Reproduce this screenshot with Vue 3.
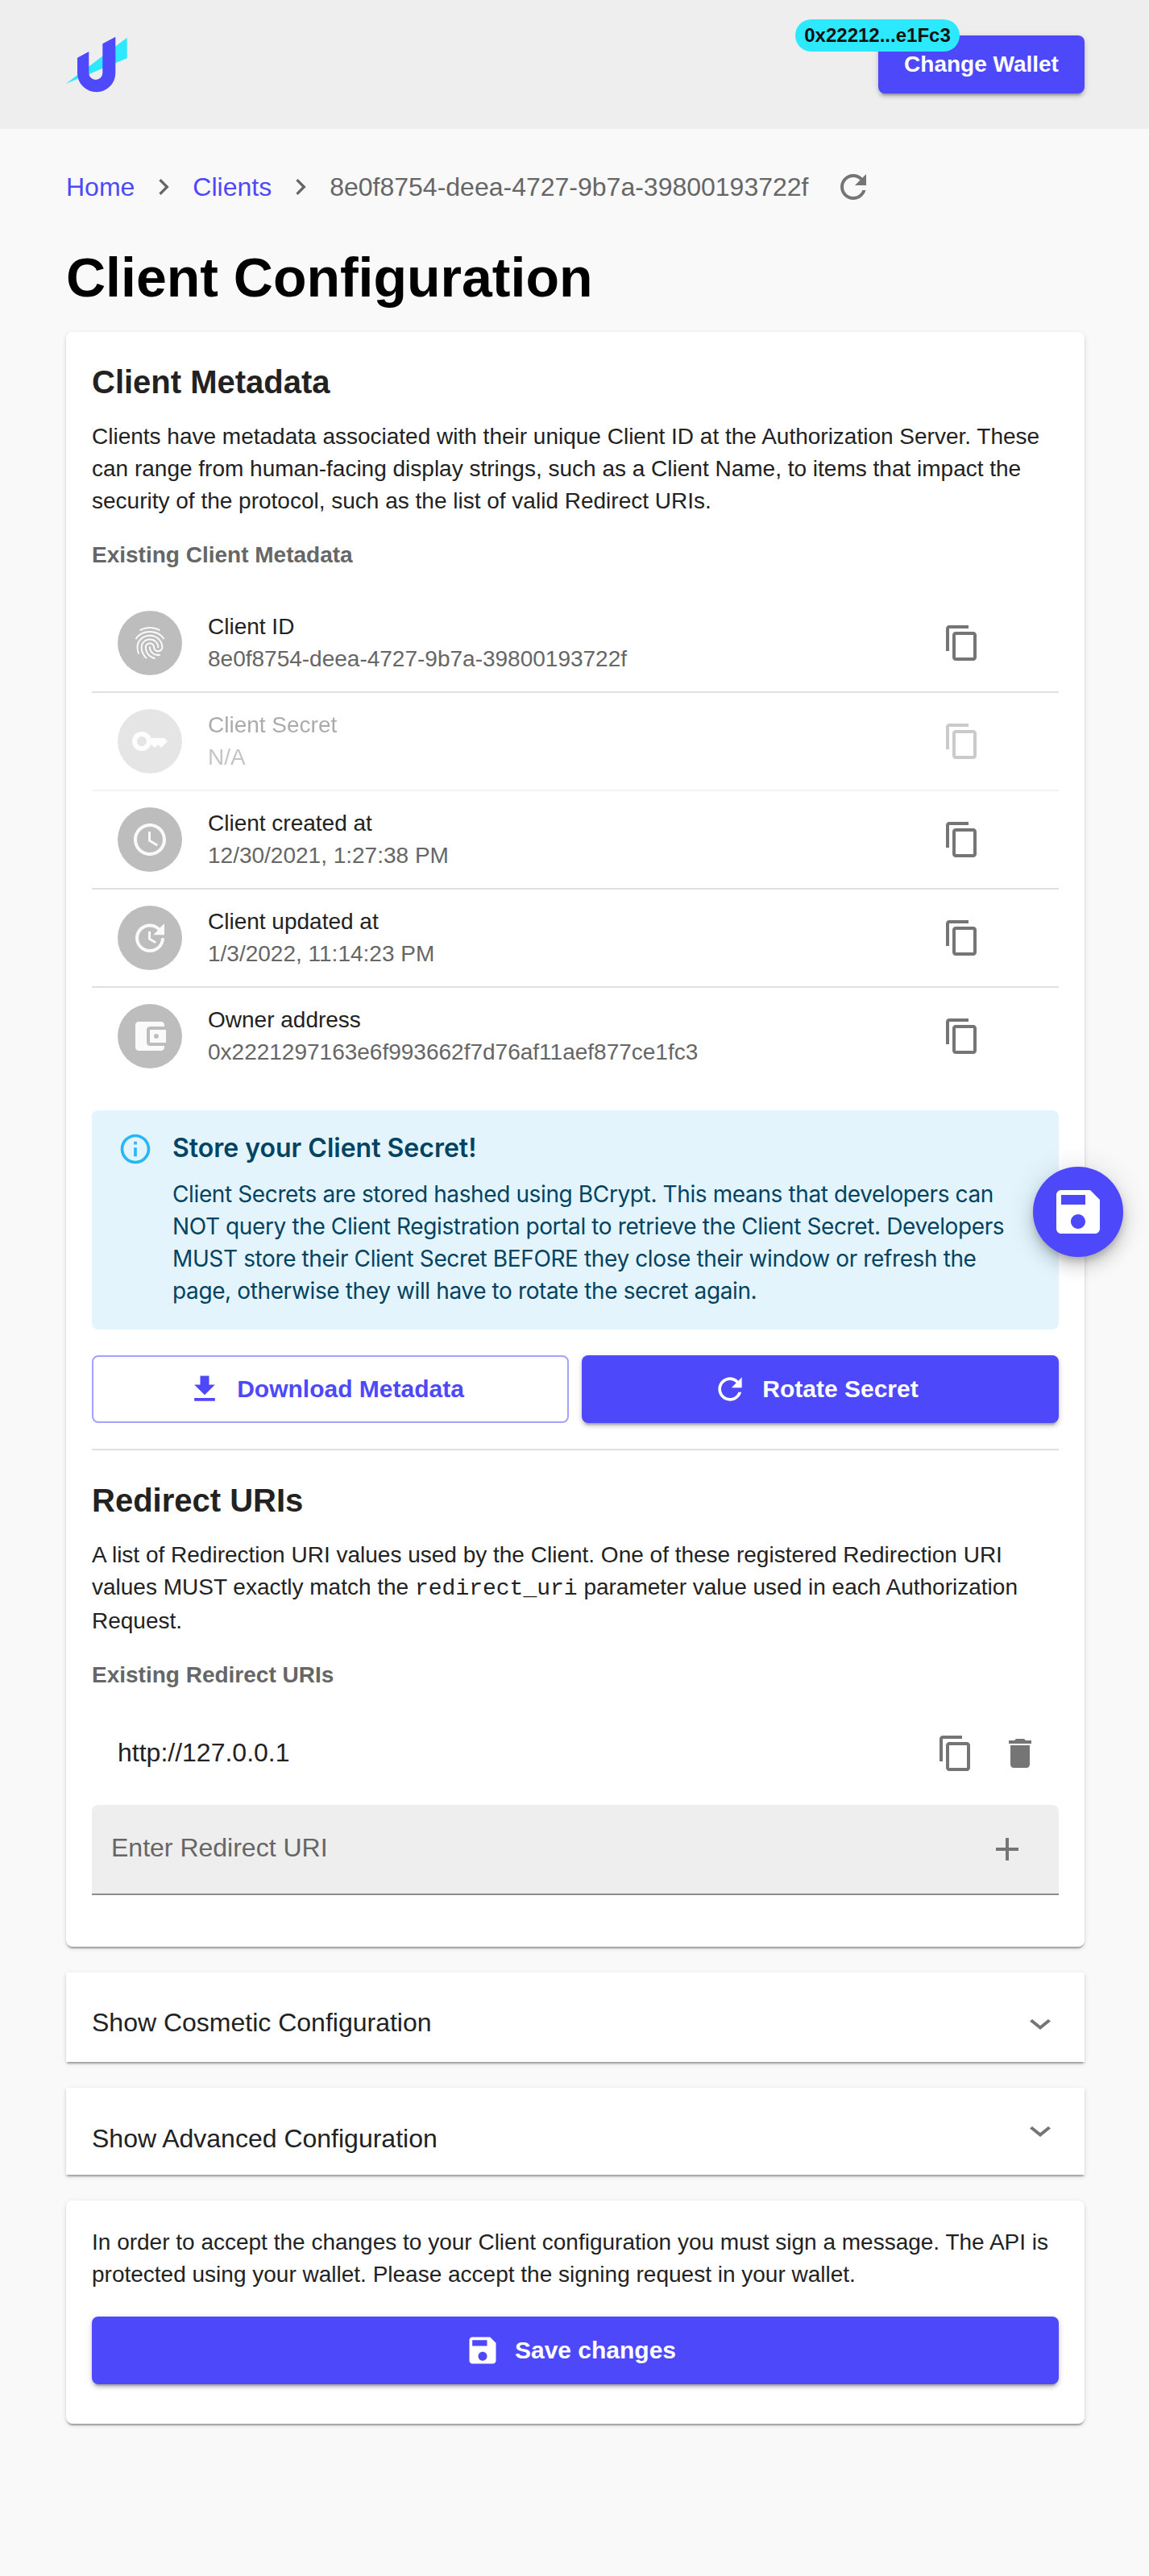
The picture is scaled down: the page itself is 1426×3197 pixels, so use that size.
<script setup>
const copyPath = 'M16 1H4c-1.1 0-2 .9-2 2v14h2V3h12V1zm3 4H8c-1.1 0-2 .9-2 2v14c0 1.1.9 2 2 2h11c1.1 0 2-.9 2-2V7c0-1.1-.9-2-2-2zm0 16H8V7h11v14z'
const savePath = 'M17 3H5c-1.11 0-2 .9-2 2v14c0 1.1.89 2 2 2h14c1.1 0 2-.9 2-2V7l-4-4zm-5 16c-1.66 0-3-1.34-3-3s1.34-3 3-3 3 1.34 3 3-1.34 3-3 3zm3-10H5V5h10v4z'
const refreshPath = 'M17.65 6.35C16.2 4.9 14.21 4 12 4c-4.42 0-7.99 3.58-7.99 8s3.57 8 7.99 8c3.73 0 6.84-2.55 7.73-6h-2.08c-.82 2.33-3.04 4-5.65 4-3.31 0-6-2.69-6-6s2.69-6 6-6c1.66 0 3.14.69 4.22 1.78L13 11h7V4l-2.35 2.35z'
const nextPath = 'M10 6L8.59 7.41 13.17 12l-4.58 4.59L10 18l6-6z'
const expandPath = 'M16.59 8.59L12 13.17 7.41 8.59 6 10l6 6 6-6z'

const metadata = [
  {
    label: 'Client ID',
    value: '8e0f8754-deea-4727-9b7a-39800193722f',
    icon: 'M17.81 4.47c-.08 0-.16-.02-.23-.06C15.66 3.42 14 3 12.01 3c-1.98 0-3.86.47-5.57 1.41-.24.13-.54.04-.68-.2-.13-.24-.04-.55.2-.68C7.82 2.52 9.86 2 12.01 2c2.13 0 3.99.47 6.03 1.52.25.13.34.43.21.67-.09.18-.26.28-.44.28zM3.5 9.72c-.1 0-.2-.03-.29-.09-.23-.16-.28-.47-.12-.7.99-1.4 2.25-2.5 3.75-3.27C9.98 4.04 14 4.03 17.15 5.65c1.5.77 2.76 1.86 3.75 3.25.16.22.11.54-.12.7-.23.16-.54.11-.7-.12-.9-1.26-2.04-2.25-3.39-2.94-2.87-1.47-6.54-1.47-9.4.01-1.36.7-2.5 1.7-3.4 2.96-.08.14-.23.21-.39.21zm6.25 12.07c-.13 0-.26-.05-.35-.15-.87-.87-1.34-1.43-2.01-2.64-.69-1.23-1.05-2.73-1.05-4.34 0-2.97 2.54-5.39 5.66-5.39s5.66 2.42 5.66 5.39c0 .28-.22.5-.5.5s-.5-.22-.5-.5c0-2.42-2.09-4.39-4.66-4.39s-4.66 1.97-4.66 4.39c0 1.44.32 2.77.93 3.85.64 1.15 1.08 1.64 1.85 2.42.19.2.19.51 0 .71-.11.1-.24.15-.37.15zm7.17-1.85c-1.19 0-2.24-.3-3.1-.89-1.49-1.01-2.38-2.65-2.38-4.39 0-.28.22-.5.5-.5s.5.22.5.5c0 1.41.72 2.74 1.94 3.56.71.48 1.54.71 2.54.71.24 0 .64-.03 1.04-.1.27-.05.53.13.58.41.05.27-.13.53-.41.58-.57.11-1.07.12-1.21.12zM14.91 22c-.04 0-.09-.01-.13-.02-1.59-.44-2.63-1.03-3.72-2.1-1.4-1.39-2.17-3.24-2.17-5.22 0-1.62 1.38-2.94 3.08-2.94s3.08 1.32 3.08 2.94c0 1.07.93 1.94 2.08 1.94s2.08-.87 2.08-1.94c0-3.77-3.25-6.83-7.25-6.83-2.84 0-5.44 1.58-6.61 4.03-.39.81-.59 1.76-.59 2.8 0 .78.07 2.01.67 3.61.1.26-.03.55-.29.64-.26.1-.55-.04-.64-.29-.49-1.31-.73-2.61-.73-3.96 0-1.2.23-2.29.68-3.24 1.33-2.79 4.28-4.6 7.51-4.6 4.55 0 8.25 3.51 8.25 7.83 0 1.62-1.38 2.94-3.08 2.94s-3.08-1.32-3.08-2.94c0-1.07-.93-1.94-2.08-1.94s-2.08.87-2.08 1.94c0 1.71.66 3.31 1.87 4.51.95.94 1.86 1.46 3.27 1.85.27.07.42.35.35.61-.05.23-.26.38-.47.38z'
  },
  {
    label: 'Client Secret',
    value: 'N/A',
    disabled: true,
    icon: 'M21 10h-8.35C11.83 7.67 9.61 6 7 6c-3.31 0-6 2.69-6 6s2.69 6 6 6c2.61 0 4.83-1.67 5.65-4H13l2 2 2-2 2 2 4-4.04L21 10zM7 15c-1.65 0-3-1.35-3-3s1.35-3 3-3 3 1.35 3 3-1.35 3-3 3z'
  },
  {
    label: 'Client created at',
    value: '12/30/2021, 1:27:38 PM',
    icon: 'M11.99 2C6.47 2 2 6.48 2 12s4.47 10 9.99 10C17.52 22 22 17.52 22 12S17.52 2 11.99 2zM12 20c-4.42 0-8-3.58-8-8s3.58-8 8-8 8 3.58 8 8-3.58 8-8 8zm.5-13H11v6l5.25 3.15.75-1.23-4.5-2.67z'
  },
  {
    label: 'Client updated at',
    value: '1/3/2022, 11:14:23 PM',
    icon: 'M21 10.12h-6.78l2.74-2.82c-2.73-2.7-7.15-2.8-9.88-.1-2.73 2.71-2.73 7.08 0 9.79s7.15 2.71 9.88 0C18.32 15.65 19 14.08 19 12.1h2c0 1.98-.88 4.55-2.64 6.29-3.51 3.48-9.21 3.48-12.72 0-3.5-3.47-3.53-9.11-.02-12.58s9.14-3.47 12.65 0L21 3v7.12zM12.5 8v4.25l3.5 2.08-.72 1.21L11 13V8h1.5z'
  },
  {
    label: 'Owner address',
    value: '0x2221297163e6f993662f7d76af11aef877ce1fc3',
    icon: 'M21 18v1c0 1.1-.9 2-2 2H5c-1.11 0-2-.9-2-2V5c0-1.1.89-2 2-2h14c1.1 0 2 .9 2 2v1h-9c-1.11 0-2 .9-2 2v8c0 1.1.89 2 2 2h9zm-9-2h10V8H12v8zm4-2.5c-.83 0-1.5-.67-1.5-1.5s.67-1.5 1.5-1.5 1.5.67 1.5 1.5-.67 1.5-1.5 1.5z'
  }
]
</script>

<template>
  <div class="page">
    <header class="topbar">
      <svg class="logo" width="80" height="72" viewBox="0 0 80 72">
        <polygon points="1.7,60 77.7,2.7 77.7,28.3" fill="#2de9ff" />
        <path d="M16 27.7L30.3 20V46.5A8.5 8.5 0 0 0 47.3 46.5V10.3L63.3 1.7V46.6A23.65 23.65 0 0 1 16 46.6Z" fill="#4e4afb" />
      </svg>
      <div class="wallet">
        <span class="wallet__badge">0x22212...e1Fc3</span>
        <button class="btn btn--primary btn--wallet">Change Wallet</button>
      </div>
    </header>

    <main class="content">
      <nav class="crumbs">
        <a class="crumbs__link">Home</a>
        <svg class="crumbs__sep" width="40" height="40" viewBox="0 0 24 24"><path :d="nextPath" /></svg>
        <a class="crumbs__link">Clients</a>
        <svg class="crumbs__sep" width="40" height="40" viewBox="0 0 24 24"><path :d="nextPath" /></svg>
        <span class="crumbs__current">8e0f8754-deea-4727-9b7a-39800193722f</span>
        <svg class="crumbs__refresh" width="48" height="48" viewBox="0 0 24 24"><path :d="refreshPath" /></svg>
      </nav>

      <h1 class="title">Client Configuration</h1>

      <section class="card card--main">
        <h2 class="card__title">Client Metadata</h2>
        <p class="card__text">Clients have metadata associated with their unique Client ID at the Authorization Server. These can range from human-facing display strings, such as a Client Name, to items that impact the security of the protocol, such as the list of valid Redirect URIs.</p>
        <h3 class="card__label">Existing Client Metadata</h3>

        <ul class="meta">
          <li
            v-for="item in metadata"
            :key="item.label"
            class="meta__row"
            :class="{ 'meta__row--disabled': item.disabled }"
          >
            <span class="meta__avatar">
              <svg width="48" height="48" viewBox="0 0 24 24"><path :d="item.icon" /></svg>
            </span>
            <div class="meta__text">
              <div class="meta__label">{{ item.label }}</div>
              <div class="meta__value">{{ item.value }}</div>
            </div>
            <svg class="icon meta__copy" width="48" height="48" viewBox="0 0 24 24"><path :d="copyPath" /></svg>
          </li>
        </ul>

        <div class="alert">
          <svg class="alert__icon" width="44" height="44" viewBox="0 0 24 24">
            <path d="M11 7h2v2h-2zm0 4h2v6h-2zm1-9C6.48 2 2 6.48 2 12s4.48 10 10 10 10-4.48 10-10S17.52 2 12 2zm0 18c-4.41 0-8-3.59-8-8s3.59-8 8-8 8 3.59 8 8-3.59 8-8 8z" />
          </svg>
          <div>
            <div class="alert__title">Store your Client Secret!</div>
            <p class="alert__body">Client Secrets are stored hashed using BCrypt. This means that developers can NOT query the Client Registration portal to retrieve the Client Secret. Developers MUST store their Client Secret BEFORE they close their window or refresh the page, otherwise they will have to rotate the secret again.</p>
          </div>
        </div>

        <div class="actions">
          <button class="btn btn--outline btn--action">
            <svg width="44" height="44" viewBox="0 0 24 24"><path d="M19 9h-4V3H9v6H5l7 7 7-7zM5 18v2h14v-2H5z" /></svg>
            <span>Download Metadata</span>
          </button>
          <button class="btn btn--primary btn--action">
            <svg width="44" height="44" viewBox="0 0 24 24"><path :d="refreshPath" /></svg>
            <span>Rotate Secret</span>
          </button>
        </div>

        <hr class="divider" />

        <h2 class="card__title card__title--second">Redirect URIs</h2>
        <p class="card__text">A list of Redirection URI values used by the Client. One of these registered Redirection URI values MUST exactly match the <code>redirect_uri</code> parameter value used in each Authorization Request.</p>
        <h3 class="card__label">Existing Redirect URIs</h3>

        <div class="uri">
          <span class="uri__value">http://127.0.0.1</span>
          <svg class="icon" width="48" height="48" viewBox="0 0 24 24"><path :d="copyPath" /></svg>
          <svg class="icon" width="48" height="48" viewBox="0 0 24 24"><path d="M6 19c0 1.1.9 2 2 2h8c1.1 0 2-.9 2-2V7H6v12zM19 4h-3.5l-1-1h-5l-1 1H5v2h14V4z" /></svg>
        </div>

        <div class="field">
          <span class="field__placeholder">Enter Redirect URI</span>
          <svg class="icon" width="48" height="48" viewBox="0 0 24 24"><path d="M19 13h-6v6h-2v-6H5v-2h6V5h2v6h6v2z" /></svg>
        </div>
      </section>

      <section class="card accordion accordion--cosmetic">
        <span class="accordion__label">Show Cosmetic Configuration</span>
        <svg class="icon" width="52" height="42" viewBox="0 0 24 24" preserveAspectRatio="none"><path :d="expandPath" /></svg>
      </section>

      <section class="card accordion accordion--advanced">
        <span class="accordion__label">Show Advanced Configuration</span>
        <svg class="icon" width="52" height="42" viewBox="0 0 24 24" preserveAspectRatio="none"><path :d="expandPath" /></svg>
      </section>

      <section class="card card--save">
        <p class="card__text card__text--flush">In order to accept the changes to your Client configuration you must sign a message. The API is protected using your wallet. Please accept the signing request in your wallet.</p>
        <button class="btn btn--primary btn--save">
          <svg width="44" height="44" viewBox="0 0 24 24"><path :d="savePath" /></svg>
          <span>Save changes</span>
        </button>
      </section>
    </main>

    <button class="fab">
      <svg width="72" height="72" viewBox="0 0 24 24"><path :d="savePath" /></svg>
    </button>
  </div>
</template>

<style>
body {
  background: #f9f9f9;
}
</style>

<style scoped>
.page {
  position: relative;
  min-height: 3197px;
  font-family: "Liberation Sans", Arial, sans-serif;
  color: #222;
}

.topbar {
  height: 160px;
  box-sizing: border-box;
  padding: 44px 80px 0 80px;
  display: flex;
  justify-content: space-between;
  align-items: flex-start;
  background: #eee;
}

.logo {
  display: block;
}

.wallet {
  position: relative;
}

.wallet__badge {
  position: absolute;
  top: -20px;
  left: -103px;
  width: 204px;
  height: 40px;
  border-radius: 20px;
  background: #2de9ff;
  color: #111;
  font-size: 24px;
  font-weight: 700;
  line-height: 40px;
  text-align: center;
  z-index: 1;
}

.btn {
  border: 0;
  border-radius: 8px;
  font-family: inherit;
  font-size: 30px;
  font-weight: 700;
  display: flex;
  align-items: center;
  justify-content: center;
  padding: 0 12px 0 0;
}

.btn svg {
  fill: currentColor;
  margin-right: 18px;
}

.btn--primary {
  background: #4d49fa;
  color: #fff;
  box-shadow: 0 6px 2px -4px rgba(0, 0, 0, 0.2), 0 4px 4px rgba(0, 0, 0, 0.14), 0 2px 10px rgba(0, 0, 0, 0.12);
}

.btn--outline {
  background: #fff;
  color: #4d49fa;
  border: 2px solid #a4a2fc;
}

.btn--wallet {
  width: 256px;
  height: 72px;
  padding: 0;
  font-size: 28px;
}

.content {
  padding: 48px 80px 0 82px;
}

.crumbs {
  height: 48px;
  display: flex;
  align-items: center;
  font-size: 32px;
}

.crumbs__link {
  color: #4d49fa;
}

.crumbs__sep {
  margin: 0 16px;
  fill: #666;
}

.crumbs__current {
  color: #666;
}

.crumbs__refresh {
  margin-left: 32px;
  fill: #757575;
}

.title {
  margin: 49px 0 0;
  font-size: 68px;
  line-height: 78px;
  font-weight: 700;
  color: #000;
}

.card {
  background: #fff;
  box-shadow: 0 4px 2px -2px rgba(0, 0, 0, 0.2), 0 2px 2px rgba(0, 0, 0, 0.14), 0 2px 6px rgba(0, 0, 0, 0.12);
}

.card--main {
  margin-top: 29px;
  padding: 32px 32px 64px;
  border-radius: 8px;
}

.card__title {
  margin: 0;
  font-size: 40px;
  line-height: 60px;
  font-weight: 700;
  color: #222;
}

.card__title--second {
  margin-top: 32px;
}

.card__text {
  margin: 18px 0 0;
  font-size: 28px;
  line-height: 40px;
  color: #222;
}

.card__text--flush {
  margin-top: 0;
}

.card__text code {
  font-family: "Liberation Mono", monospace;
  font-size: 28px;
}

.card__label {
  margin: 27px 0 0;
  font-size: 28px;
  line-height: 40px;
  font-weight: 700;
  color: #666;
}

.meta {
  list-style: none;
  margin: 29px 0 0;
  padding: 0;
}

.meta__row {
  height: 122px;
  box-sizing: border-box;
  border-bottom: 2px solid #e0e0e0;
  padding-left: 32px;
  display: flex;
  align-items: center;
}

.meta__row:last-child {
  height: 120px;
  border-bottom: 0;
}

.meta__row--disabled {
  opacity: 0.38;
}

.meta__avatar {
  width: 80px;
  height: 80px;
  border-radius: 50%;
  background: #bdbdbd;
  fill: #fafafa;
  display: flex;
  align-items: center;
  justify-content: center;
  margin-right: 32px;
}

.meta__text {
  flex: 1;
  font-size: 28px;
  line-height: 40px;
}

.meta__label {
  color: #222;
}

.meta__value {
  color: #666;
}

.icon {
  fill: #757575;
  flex: none;
}

.meta__copy {
  margin-right: 96px;
}

.alert {
  margin-top: 32px;
  padding: 26px 32px 28px;
  border-radius: 8px;
  background: #e3f4fd;
  display: flex;
  gap: 24px;
  color: #014361;
}

.alert__icon {
  flex: none;
  fill: #29b6f6;
}

.alert__title {
  font-family: Inter, sans-serif;
  font-size: 32px;
  font-weight: 600;
  line-height: 42px;
}

.alert__body {
  margin: 16px 0 0;
  font-family: Inter, sans-serif;
  font-size: 28px;
  line-height: 40px;
  letter-spacing: -0.38px;
}

.actions {
  margin-top: 32px;
  display: grid;
  grid-template-columns: 1fr 1fr;
  gap: 16px;
}

.btn--action {
  height: 84px;
  box-sizing: border-box;
}

.divider {
  margin: 32px 0 0;
  border: 0;
  height: 2px;
  background: #e0e0e0;
}

.uri {
  margin-top: 13px;
  height: 128px;
  padding: 0 24px 0 32px;
  display: flex;
  align-items: center;
  gap: 32px;
}

.uri__value {
  flex: 1;
  margin-bottom: 2px;
  font-size: 32px;
  color: #222;
}

.field {
  height: 112px;
  box-sizing: border-box;
  padding: 0 40px 0 24px;
  border-bottom: 2px solid #8c8c8c;
  border-radius: 8px 8px 0 0;
  background: #eee;
  display: flex;
  align-items: center;
  justify-content: space-between;
}

.field__placeholder {
  margin-bottom: 4px;
  font-size: 32px;
  color: #666;
}

.accordion {
  margin-top: 32px;
  padding: 0 32px;
  display: flex;
  align-items: center;
  justify-content: space-between;
  font-size: 32px;
  color: #222;
}

.accordion .icon {
  margin-right: -3px;
  filter: blur(0.6px);
}

.accordion--cosmetic {
  height: 111px;
}

.accordion--cosmetic .accordion__label {
  margin-top: 14px;
}

.accordion--cosmetic .icon {
  margin-top: 17px;
}

.accordion--advanced {
  height: 108px;
}

.accordion--advanced .accordion__label {
  margin-top: 18px;
}

.card--save {
  margin-top: 32px;
  padding: 32px 32px 49px;
  border-radius: 8px;
}

.btn--save {
  margin-top: 32px;
  width: 100%;
  height: 84px;
}

.fab {
  position: absolute;
  top: 1448px;
  right: 32px;
  width: 112px;
  height: 112px;
  padding: 0;
  border: 0;
  border-radius: 50%;
  background: #4d49fa;
  fill: #fff;
  display: flex;
  align-items: center;
  justify-content: center;
  box-shadow: 0 6px 10px -2px rgba(0, 0, 0, 0.2), 0 12px 20px rgba(0, 0, 0, 0.14), 0 2px 36px rgba(0, 0, 0, 0.12);
}
</style>
